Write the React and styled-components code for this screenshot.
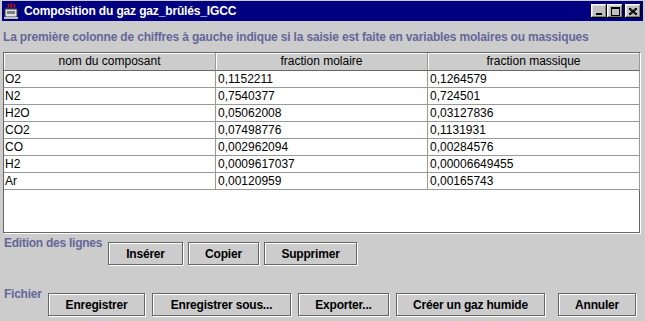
import React from 'react';
import styled, { createGlobalStyle } from 'styled-components';

const GlobalStyle = createGlobalStyle`
  html, body {
    margin: 0;
    padding: 0;
    background: #cccccc;
  }
  body {
    font-family: "Liberation Sans", Arial, sans-serif;
  }
`;

const Frame = styled.div`
  width: 645px;
  height: 321px;
  box-sizing: border-box;
  padding: 1px 2px 0 2px;
  background: #cccccc;
  display: flex;
  flex-direction: column;
  overflow: hidden;
`;

const TitleBar = styled.div`
  height: 20px;
  flex: none;
  background: #000080;
  display: flex;
  align-items: center;
  padding: 0 2px 0 1px;
`;

const TitleText = styled.span`
  flex: 1;
  margin-left: 5px;
  color: #ffffff;
  font-weight: bold;
  font-size: 12px;
  letter-spacing: -0.15px;
  white-space: nowrap;
`;

const CtrlGroup = styled.div`
  display: flex;
  align-items: center;
`;

const CtrlButton = styled.div`
  width: 16px;
  height: 14px;
  margin-left: ${(p) => (p.$gap ? '2px' : '0')};
  background: #c0c0c0;
  box-shadow: inset -1px -1px #000000, inset 1px 1px #ffffff,
    inset -2px -2px #808080, inset 2px 2px #dfdfdf;
  display: flex;
  align-items: center;
  justify-content: center;
`;

const Content = styled.div`
  flex: 1;
  display: flex;
  flex-direction: column;
  padding: 0 1px;
`;

const Hint = styled.div`
  margin-top: 9px;
  height: 14px;
  line-height: 14px;
  font-size: 12px;
  font-weight: bold;
  letter-spacing: -0.17px;
  color: #666699;
  white-space: nowrap;
`;

const TableBox = styled.div`
  margin-top: 8px;
  width: 637px;
  height: 181px;
  box-sizing: border-box;
  border: 1px solid #666666;
  box-shadow: 1px 1px 0 #ffffff;
  background: #ffffff;
  display: flex;
  flex-direction: column;
`;

const Row = styled.div`
  display: grid;
  grid-template-columns: repeat(3, 212px);
`;

const HeadCell = styled.div`
  height: 18px;
  box-sizing: border-box;
  background: #cccccc;
  border-right: 1px solid #999999;
  border-bottom: 1px solid #666666;
  box-shadow: inset 1px 1px 0 #ffffff;
  font-size: 12px;
  line-height: 17px;
  text-align: center;
  color: #000000;
`;

const Cell = styled.div`
  height: 17px;
  box-sizing: border-box;
  border-right: 1px solid #999999;
  border-bottom: 1px solid #999999;
  padding-left: ${(p) => (p.$first ? '1px' : '2px')};
  font-size: 12px;
  line-height: 17px;
  color: #000000;
  white-space: nowrap;
`;

const Section = styled.div`
  margin-top: ${(p) => p.$top}px;
  display: flex;
  align-items: flex-start;
  margin-left: 1px;
`;

const SectionLabel = styled.div`
  width: ${(p) => p.$w}px;
  flex: none;
  font-size: 12px;
  line-height: 14px;
  font-weight: bold;
  letter-spacing: -0.25px;
  color: #666699;
  white-space: nowrap;
`;

const Buttons = styled.div`
  margin-top: 6px;
  display: flex;
  gap: ${(p) => p.$gap}px;
`;

const Button = styled.button`
  width: ${(p) => p.$w}px;
  height: 23px;
  box-sizing: border-box;
  margin: 0 0 0 ${(p) => p.$push || 0}px;
  padding: 0;
  background: #cccccc;
  border: 1px solid #666666;
  box-shadow: 1px 1px 0 #ffffff, inset 1px 1px 0 #ffffff;
  font-family: "Liberation Sans", Arial, sans-serif;
  font-size: 12px;
  font-weight: bold;
  letter-spacing: -0.2px;
  color: #000000;
  white-space: nowrap;
`;

const rows = [
  ['O2', '0,1152211', '0,1264579'],
  ['N2', '0,7540377', '0,724501'],
  ['H2O', '0,05062008', '0,03127836'],
  ['CO2', '0,07498776', '0,1131931'],
  ['CO', '0,002962094', '0,00284576'],
  ['H2', '0,0009617037', '0,00006649455'],
  ['Ar', '0,00120959', '0,00165743'],
];

function AppIcon() {
  return (
    <svg width="16" height="16" viewBox="0 0 16 16">
      <rect x="2" y="6" width="12" height="8" fill="#e0e0e0" stroke="#404040" />
      <rect x="4" y="8" width="8" height="3" fill="#808080" />
      <path d="M3 5 L13 5" stroke="#404040" />
      <path d="M5 1 Q6 3 5 4 M8 0 Q9 2 8 4 M11 1 Q12 3 11 4" stroke="#e00000" fill="none" strokeWidth="1.5" />
      <rect x="1" y="14" width="14" height="2" fill="#c0c0c0" />
    </svg>
  );
}

export default function App() {
  return (
    <>
      <GlobalStyle />
      <Frame>
        <TitleBar>
          <AppIcon />
          <TitleText>Composition du gaz gaz_brûlés_IGCC</TitleText>
          <CtrlGroup>
            <CtrlButton>
              <svg width="8" height="8" viewBox="0 0 8 8">
                <rect x="1" y="6" width="6" height="2" fill="#000" />
              </svg>
            </CtrlButton>
            <CtrlButton>
              <svg width="9" height="9" viewBox="0 0 9 9">
                <rect x="0.5" y="0.5" width="8" height="8" fill="none" stroke="#000" />
                <rect x="0" y="0" width="9" height="2" fill="#000" />
              </svg>
            </CtrlButton>
            <CtrlButton $gap>
              <svg width="8" height="7" viewBox="0 0 8 7">
                <path d="M0 0 L8 7 M1 0 L8 6 M0 1 L7 7 M8 0 L0 7 M7 0 L0 6 M8 1 L1 7" stroke="#000" strokeWidth="1" />
              </svg>
            </CtrlButton>
          </CtrlGroup>
        </TitleBar>
        <Content>
          <Hint>La première colonne de chiffres à gauche indique si la saisie est faite en variables molaires ou massiques</Hint>
          <TableBox>
            <Row>
              <HeadCell>nom du composant</HeadCell>
              <HeadCell>fraction molaire</HeadCell>
              <HeadCell>fraction massique</HeadCell>
            </Row>
            {rows.map((r) => (
              <Row key={r[0]}>
                <Cell $first>{r[0]}</Cell>
                <Cell>{r[1]}</Cell>
                <Cell>{r[2]}</Cell>
              </Row>
            ))}
          </TableBox>
          <Section $top={3}>
            <SectionLabel $w={104}>Edition des lignes</SectionLabel>
            <Buttons $gap={5}>
              <Button $w={75}>Insérer</Button>
              <Button $w={71}>Copier</Button>
              <Button $w={93}>Supprimer</Button>
            </Buttons>
          </Section>
          <Section $top={22}>
            <SectionLabel $w={44}>Fichier</SectionLabel>
            <Buttons $gap={7}>
              <Button $w={97}>Enregistrer</Button>
              <Button $w={139}>Enregistrer sous...</Button>
              <Button $w={91}>Exporter...</Button>
              <Button $w={149}>Créer un gaz humide</Button>
              <Button $w={78} $push={6}>Annuler</Button>
            </Buttons>
          </Section>
        </Content>
      </Frame>
    </>
  );
}
